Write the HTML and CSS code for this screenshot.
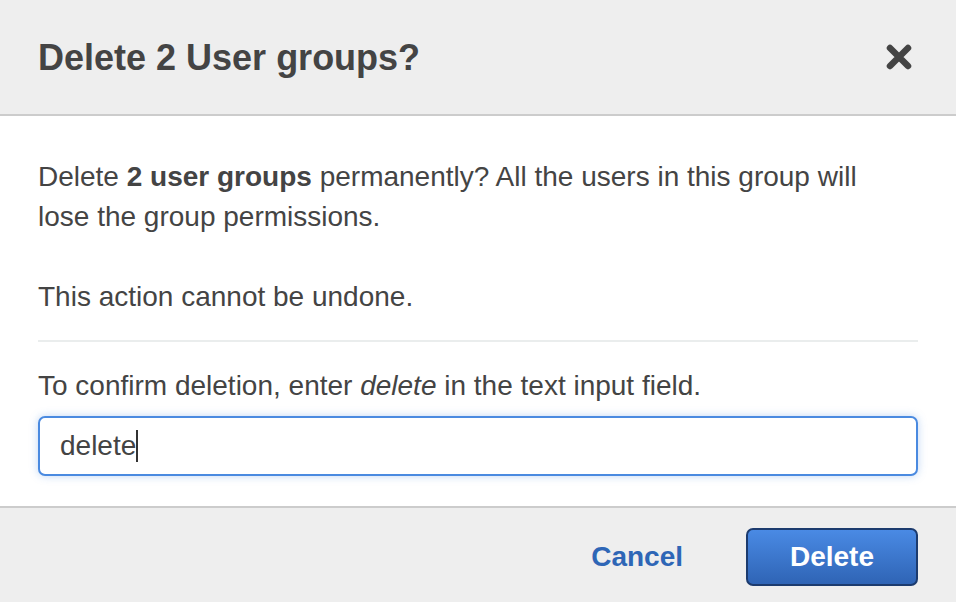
FILE: index.html
```html
<!DOCTYPE html>
<html lang="en">
<head>
<meta charset="utf-8">
<title>Delete 2 User groups?</title>
<link rel="stylesheet" href="styles.css">
</head>
<body>
<div class="modal">
  <header class="modal-header">
    <h1 class="modal-title">Delete 2 User groups?</h1>
    <button class="close-btn" aria-label="Close">
      <svg width="26" height="26" viewBox="0 0 26 26">
        <path d="M4 4 L22 22 M22 4 L4 22" stroke="#444" stroke-width="6.5" stroke-linecap="round" fill="none"/>
      </svg>
    </button>
  </header>
  <section class="modal-body">
    <p class="para">Delete <b>2 user groups</b> permanently? All the users in this group will lose the group permissions.</p>
    <p class="para para-last">This action cannot be undone.</p>
    <hr class="divider">
    <p class="confirm">To confirm deletion, enter <i>delete</i> in the text input field.</p>
    <div class="input" role="textbox">delete<span class="caret"></span></div>
  </section>
  <footer class="modal-footer">
    <button class="cancel-btn">Cancel</button>
    <button class="delete-btn">Delete</button>
  </footer>
</div>
</body>
</html>
```

FILE: styles.css
```css
html, body {
  margin: 0;
  padding: 0;
  background: #ffffff;
}
body {
  font-family: "Liberation Sans", Arial, Helvetica, sans-serif;
  color: #444444;
}
.modal {
  width: 956px;
  height: 602px;
  display: flex;
  flex-direction: column;
  overflow: hidden;
}
.modal-header {
  height: 114px;
  background: #eeeeee;
  border-bottom: 2px solid #cccccc;
  display: flex;
  align-items: center;
  justify-content: space-between;
  padding: 0 44px 0 38px;
  flex: none;
}
.modal-title {
  margin: 0;
  font-size: 36px;
  font-weight: bold;
  line-height: 40px;
  color: #444444;
  position: relative;
  top: 1px;
}
.close-btn {
  border: 0;
  background: none;
  padding: 0;
  width: 26px;
  height: 26px;
  display: flex;
  cursor: pointer;
}
.modal-body {
  padding: 41px 38px 30px 38px;
  background: #ffffff;
  flex: none;
}
.para {
  margin: 0 0 40px 0;
  font-size: 28px;
  line-height: 40px;
  max-width: 868px;
}
.para-last {
  margin-bottom: 23px;
}
.divider {
  border: 0;
  height: 2px;
  background: #eaeded;
  margin: 0 0 24px 0;
}
.confirm {
  margin: 0 0 10px 0;
  font-size: 28px;
  line-height: 40px;
}
.input {
  height: 56px;
  border: 2px solid #4a8ae0;
  border-radius: 7px;
  box-shadow: 0 0 8px rgba(74, 138, 224, 0.35);
  padding: 0 20px;
  display: flex;
  align-items: center;
  font-size: 28px;
  color: #444444;
  background: #ffffff;
}
.caret {
  display: inline-block;
  width: 2px;
  height: 32px;
  background: #333333;
  margin-left: 0;
}
.modal-footer {
  flex: 1;
  background: #eeeeee;
  border-top: 2px solid #cccccc;
  display: flex;
  justify-content: flex-end;
  align-items: flex-start;
  padding: 20px 38px 0 38px;
  gap: 63px;
}
.cancel-btn {
  border: 0;
  background: none;
  padding: 0;
  height: 58px;
  font-family: inherit;
  font-size: 28px;
  font-weight: bold;
  color: #2e66b6;
  cursor: pointer;
}
.delete-btn {
  width: 172px;
  height: 58px;
  border: 2px solid #1c3b6e;
  border-radius: 7px;
  background: linear-gradient(#4a8ae4, #2f64b5);
  color: #ffffff;
  font-family: inherit;
  font-size: 28px;
  font-weight: bold;
  cursor: pointer;
  padding: 0;
}
```
